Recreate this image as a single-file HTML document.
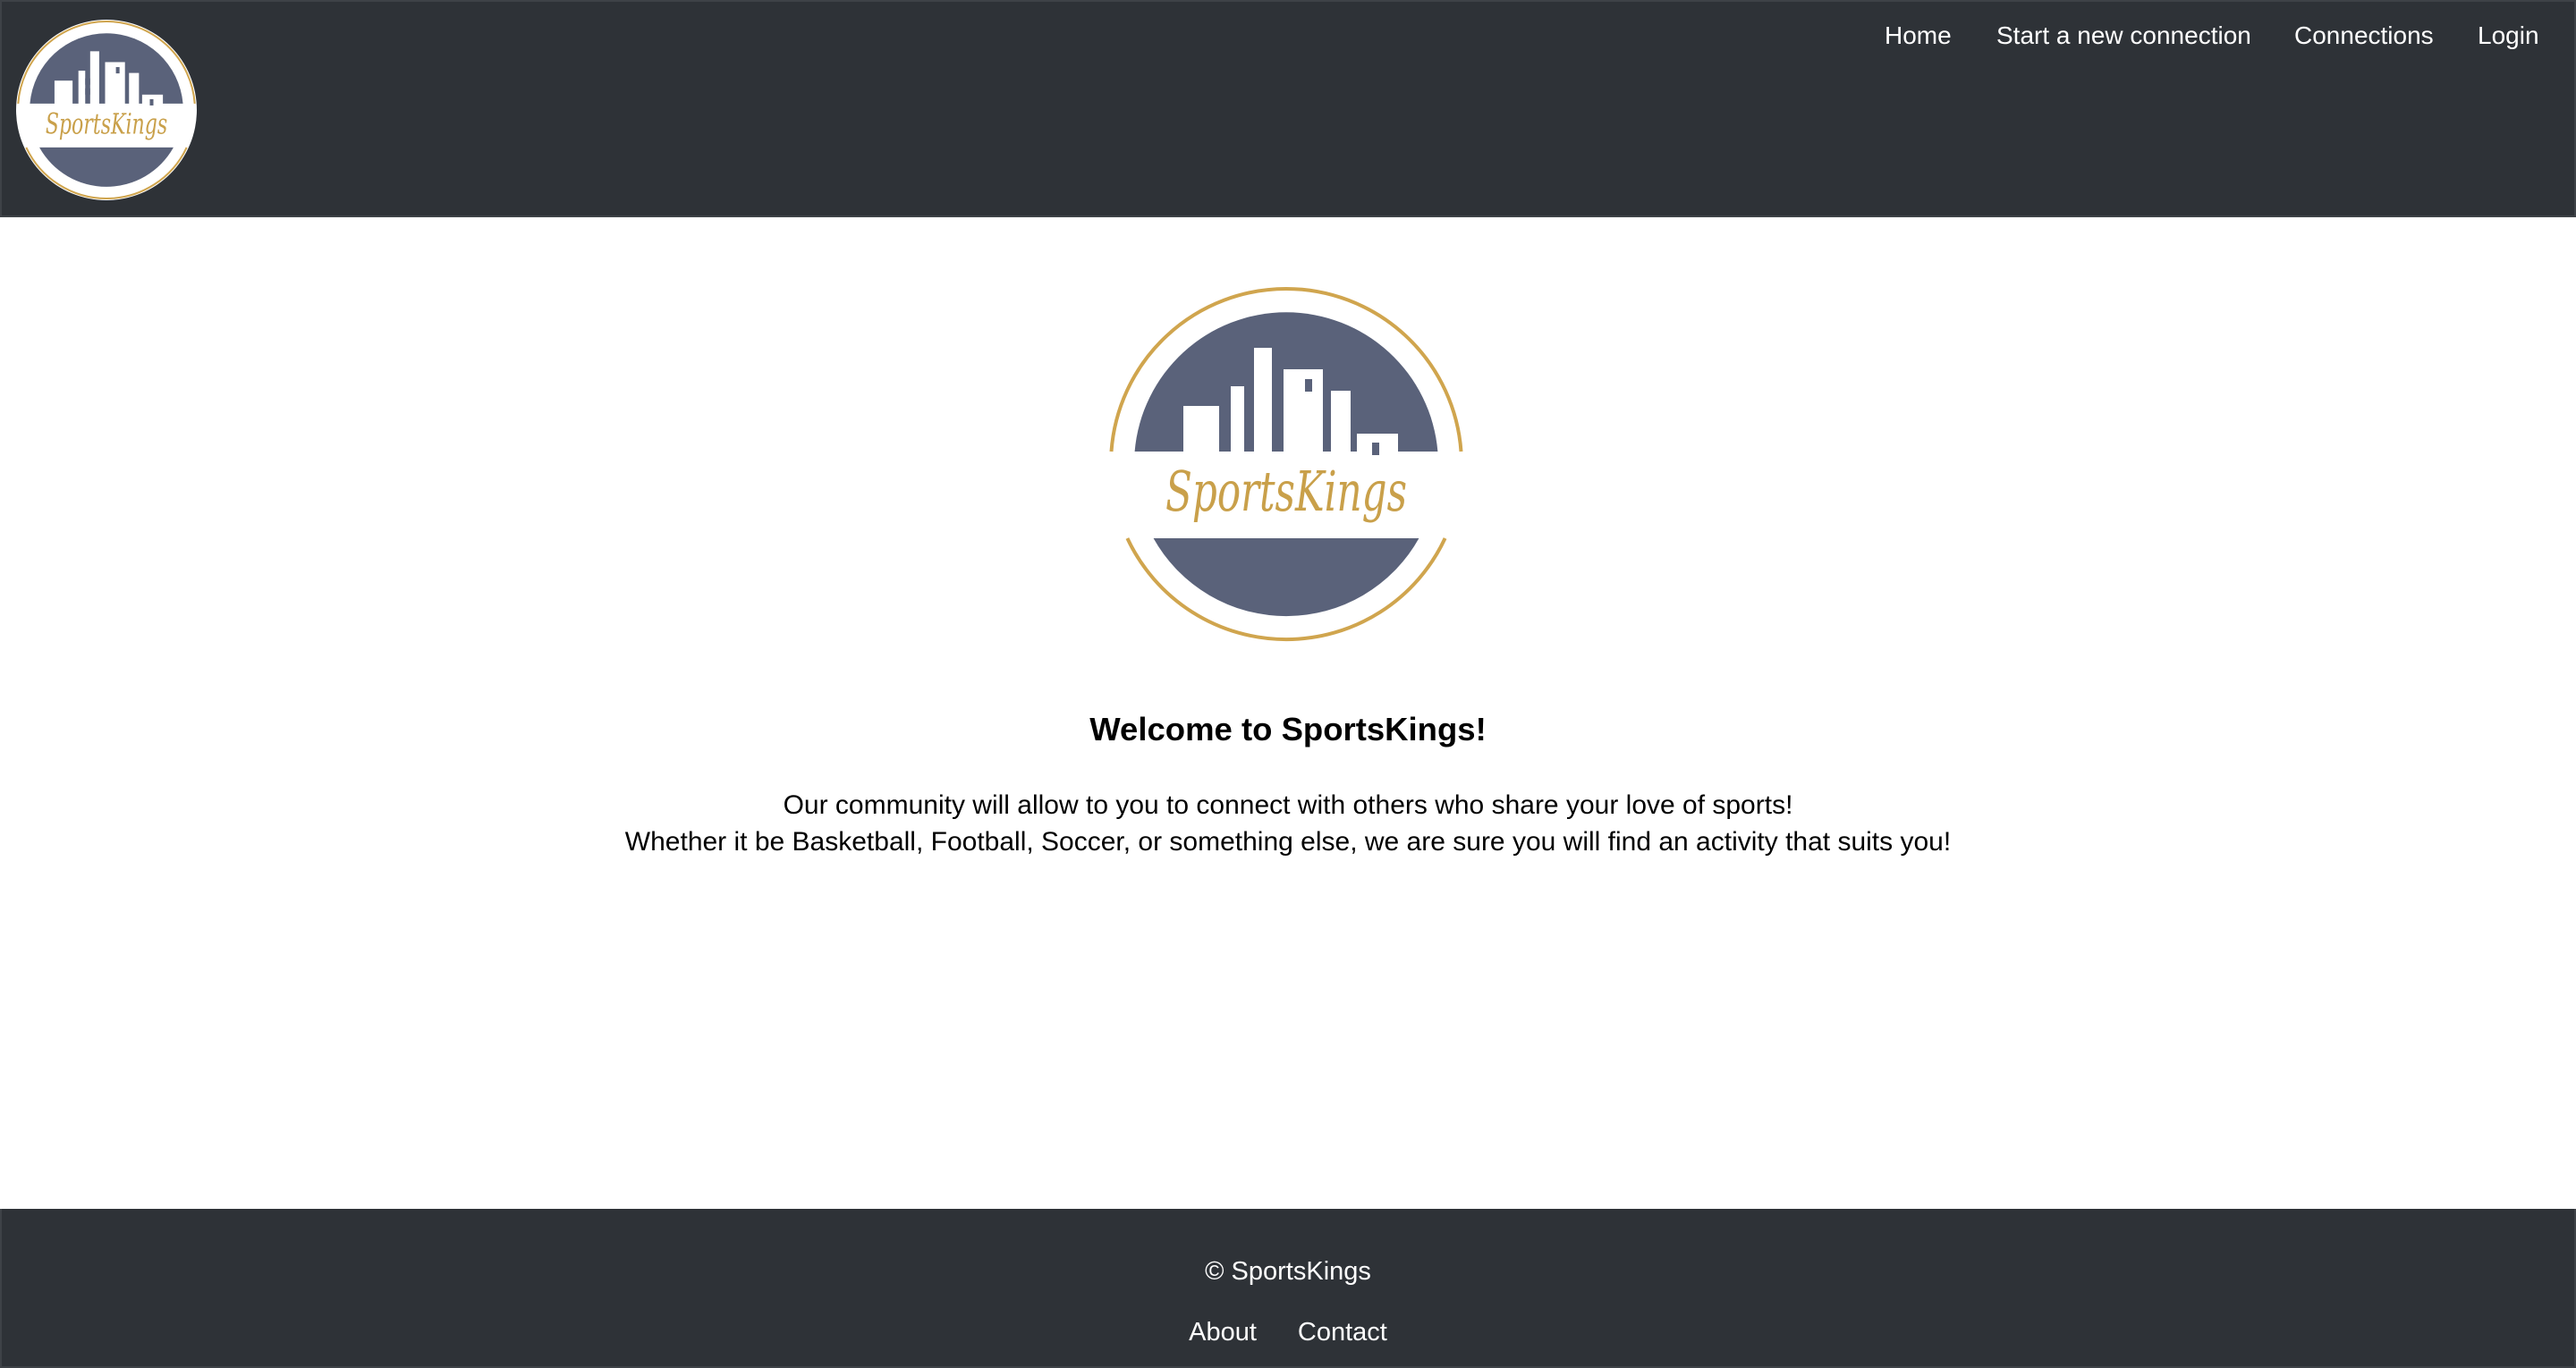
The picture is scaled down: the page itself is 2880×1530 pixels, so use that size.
<!DOCTYPE html>
<html><head><meta charset="utf-8"><style>
html,body{margin:0;padding:0;width:2880px;height:1530px;overflow:hidden;background:#fff;font-family:"Liberation Sans",sans-serif;}
.hdr{position:absolute;left:0;top:0;width:2880px;height:243px;background:#2e3237;border:2px solid #3e4247;box-sizing:border-box;}
.nav{position:absolute;top:22px;color:#fff;font-size:28px;line-height:36px;white-space:nowrap;}
.ftr{position:absolute;left:0;top:1352px;width:2880px;height:178px;background:#2e3237;border:2px solid #3e4247;border-top:none;box-sizing:border-box;}
.c{position:absolute;left:0;width:2880px;text-align:center;white-space:nowrap;}
</style></head><body>
<svg width="0" height="0" style="position:absolute"><defs>
<g id="logo">
<path d="M30.6,186 A170,170 0 0 1 369.4,186 Z" fill="#5a627a"/>
<path d="M51.6,283 A170,170 0 0 0 348.4,283 Z" fill="#5a627a"/>
<path d="M4.5,186 A196,196 0 0 1 395.5,186" fill="none" stroke="#d0a54e" stroke-width="4"/>
<path d="M22.4,283 A196,196 0 0 0 377.6,283" fill="none" stroke="#d0a54e" stroke-width="4"/>
<g fill="#fff">
<rect x="85" y="135" width="40" height="56"/>
<rect x="138" y="113" width="15" height="78"/>
<rect x="164" y="70" width="20" height="121"/>
<rect x="197" y="94" width="44" height="97"/>
<rect x="250" y="118" width="22" height="83"/>
<rect x="279" y="166" width="46" height="25"/>
</g>
<g fill="#5a627a">
<rect x="153" y="130" width="11" height="14"/><rect x="153" y="152" width="11" height="14"/>
<rect x="221" y="105" width="8" height="14"/>
<rect x="296" y="176" width="8" height="14"/>
</g>
<text x="200" y="252" text-anchor="middle" font-family="'DejaVu Serif',serif" font-style="italic" font-size="62" fill="#c9a04a" textLength="270" lengthAdjust="spacingAndGlyphs">SportsKings</text>
</g></defs></svg>

<div class="hdr"></div>
<svg style="position:absolute;left:18px;top:22px" width="202" height="202" viewBox="0 0 400 400">
<circle cx="200" cy="200" r="200" fill="#fff"/>
<use href="#logo"/>
</svg>
<div class="nav" style="left:2107px">Home</div>
<div class="nav" style="left:2232px">Start a new connection</div>
<div class="nav" style="left:2565px">Connections</div>
<div class="nav" style="left:2770px">Login</div>

<svg style="position:absolute;left:1238px;top:319px" width="400" height="400" viewBox="0 0 400 400"><use href="#logo"/></svg>

<div class="c" style="top:794px;font-size:36.5px;font-weight:bold;line-height:44px;color:#000">Welcome to SportsKings!</div>
<div class="c" style="top:880px;font-size:30px;line-height:41px;color:#000">Our community will allow to you to connect with others who share your love of sports!<br>Whether it be Basketball, Football, Soccer, or something else, we are sure you will find an activity that suits you!</div>

<div class="ftr"></div>
<div class="c" style="top:1404px;font-size:29px;line-height:36px;color:#fff">© SportsKings</div>
<div class="c" style="top:1472px;font-size:29px;line-height:36px;color:#fff"><span>About</span><span style="margin-left:46px">Contact</span></div>
</body></html>
